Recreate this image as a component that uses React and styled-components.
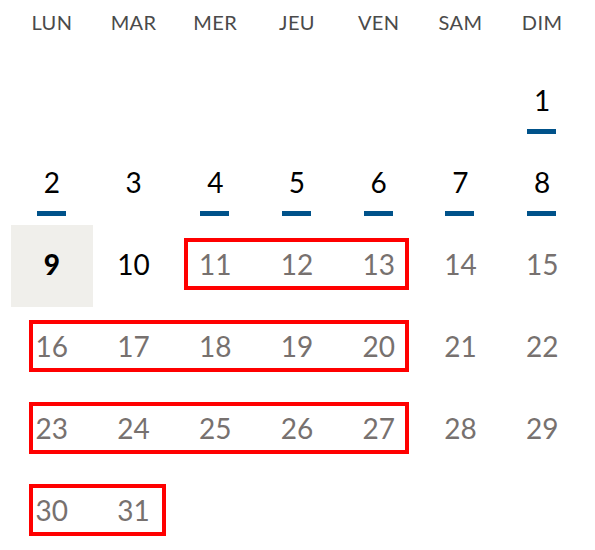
import React from "react";
import styled, { createGlobalStyle } from "styled-components";

const Global = createGlobalStyle`
  html, body { margin: 0; padding: 0; background: #ffffff; }
  body { font-family: Lato, "Noto Sans", sans-serif; }
`;

const Page = styled.div`
  padding-left: 11px;
  width: 572px;
`;

const Grid = styled.div`
  display: grid;
  grid-template-columns: repeat(7, 1fr);
  grid-template-rows: 61px;
  grid-auto-rows: 82px;
  width: 572px;
`;

const DayName = styled.div`
  grid-row: 1;
  grid-column: ${(p) => p.$col};
  display: flex;
  justify-content: center;
  padding-top: 11px;
  font-family: Lato, "Noto Sans", sans-serif;
  font-size: 20px;
  line-height: 22px;
  letter-spacing: 0.4px;
  color: #4a4a4a;
  text-transform: uppercase;
`;

const Cell = styled.div`
  grid-row: ${(p) => p.$row};
  grid-column: ${(p) => p.$col};
  position: relative;
  display: flex;
  align-items: center;
  justify-content: center;
  padding-bottom: 5px;
  box-sizing: border-box;
  background: ${(p) => (p.$today ? "#f0efeb" : "transparent")};
  font-family: Lato, "DejaVu Sans", sans-serif;
  font-size: 28px;
  font-weight: ${(p) => (p.$today ? 900 : 400)};
  line-height: 1;
  color: ${(p) => (p.$muted ? "#77716f" : "#000000")};
`;

const Marker = styled.span`
  position: absolute;
  left: 50%;
  bottom: 9px;
  width: 29px;
  height: 5px;
  margin-left: -15px;
  background: #00528a;
`;

const Highlight = styled.div`
  grid-row: ${(p) => p.$row};
  grid-column: ${(p) => p.$from} / ${(p) => p.$to};
  margin: 13px ${(p) => p.$right}px 0 ${(p) => p.$left}px;
  height: 52px;
  box-sizing: border-box;
  border: 4px solid #ff0000;
  pointer-events: none;
  z-index: 1;
`;

const days = ["LUN", "MAR", "MER", "JEU", "VEN", "SAM", "DIM"];
const marked = new Set([1, 2, 4, 5, 6, 7, 8]);
const today = 9;

const highlights = [
  { row: 4, from: 3, to: 6, left: 10, right: 11 },
  { row: 5, from: 1, to: 6, left: 18, right: 11 },
  { row: 6, from: 1, to: 6, left: 18, right: 11 },
  { row: 7, from: 1, to: 3, left: 18, right: 8 },
];

export default function App() {
  const cells = [];
  for (let d = 1; d <= 31; d++) {
    const idx = d + 5; // month starts on Sunday (index 6)
    const col = (idx % 7) + 1;
    const row = Math.floor(idx / 7) + 2;
    cells.push(
      <Cell key={d} $row={row} $col={col} $today={d === today} $muted={d > 10}>
        {d}
        {marked.has(d) && <Marker />}
      </Cell>
    );
  }
  return (
    <>
      <Global />
      <Page>
        <Grid>
          {days.map((n, i) => (
            <DayName key={n} $col={i + 1}>
              {n}
            </DayName>
          ))}
          {cells}
          {highlights.map((h, i) => (
            <Highlight key={i} $row={h.row} $from={h.from} $to={h.to} $left={h.left} $right={h.right} />
          ))}
        </Grid>
      </Page>
    </>
  );
}
